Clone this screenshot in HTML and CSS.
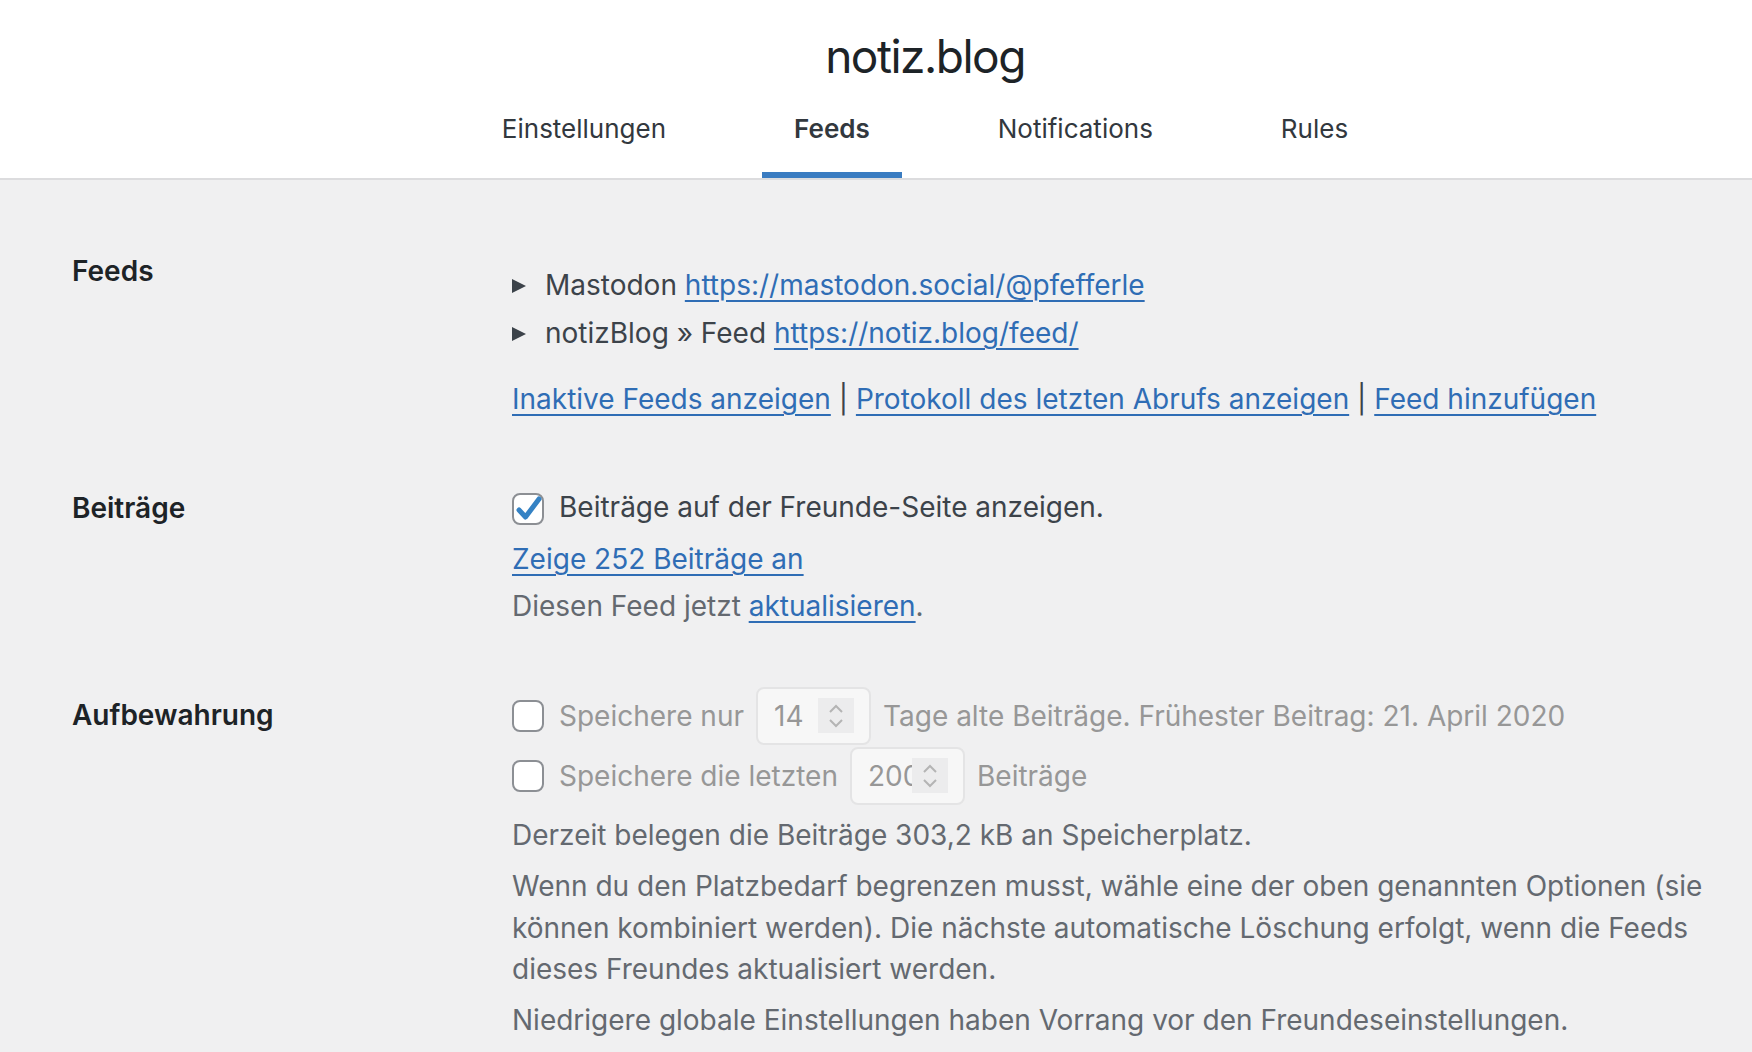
FILE: index.html
```html
<!DOCTYPE html>
<html lang="de">
<head>
<meta charset="utf-8">
<title>notiz.blog – Feeds</title>
<link rel="stylesheet" href="styles.css">
</head>
<body>
<header class="hdr">
  <h1 class="title">notiz.blog</h1>
  <nav class="tabs">
    <a class="tab" href="#">Einstellungen</a>
    <a class="tab active" href="#">Feeds</a>
    <a class="tab" href="#">Notifications</a>
    <a class="tab" href="#">Rules</a>
  </nav>
</header>
<main class="form">
  <section class="section s1">
    <div class="label">Feeds</div>
    <div class="td">
      <ul class="feeds">
        <li><span class="tri"></span><span>Mastodon <a href="#">https://mastodon.social/@pfefferle</a></span></li>
        <li><span class="tri"></span><span>notizBlog » Feed <a href="#">https://notiz.blog/feed/</a></span></li>
      </ul>
      <div class="links"><a href="#">Inaktive Feeds anzeigen</a> | <a href="#">Protokoll des letzten Abrufs anzeigen</a> | <a href="#">Feed hinzufügen</a></div>
    </div>
  </section>
  <section class="section s2">
    <div class="label l2">Beiträge</div>
    <div class="td">
      <label class="check-line">
        <span class="cb checked"><svg viewBox="0 0 32 32" width="32" height="32"><polyline points="7,17 13.5,24 27,6" fill="none" stroke="#3582c4" stroke-width="5" stroke-linecap="round" stroke-linejoin="round"/></svg></span>
        <span>Beiträge auf der Freunde-Seite anzeigen.</span>
      </label>
      <div class="line zeige"><a href="#">Zeige 252 Beiträge an</a></div>
      <div class="line desc diesen">Diesen Feed jetzt <a href="#">aktualisieren</a>.</div>
    </div>
  </section>
  <section class="section s3">
    <div class="label l3">Aufbewahrung</div>
    <div class="td">
      <div class="opt">
        <span class="cb"></span>
        <span class="dis">Speichere nur</span>
        <span class="num"><span class="val">14</span><span class="spin"><svg viewBox="0 0 36 35" width="36" height="35"><polyline points="12,14 18,8 24,14" fill="none" stroke="#b4b4b4" stroke-width="2"/><polyline points="12,22 18,28 24,22" fill="none" stroke="#b4b4b4" stroke-width="2"/></svg></span></span>
        <span class="dis">Tage alte Beiträge. Frühester Beitrag: 21. April 2020</span>
      </div>
      <div class="opt">
        <span class="cb"></span>
        <span class="dis">Speichere die letzten</span>
        <span class="num"><span class="val">200</span><span class="spin"><svg viewBox="0 0 36 35" width="36" height="35"><polyline points="12,14 18,8 24,14" fill="none" stroke="#b4b4b4" stroke-width="2"/><polyline points="12,22 18,28 24,22" fill="none" stroke="#b4b4b4" stroke-width="2"/></svg></span></span>
        <span class="dis">Beiträge</span>
      </div>
      <p class="desc p1">Derzeit belegen die Beiträge 303,2 kB an Speicherplatz.</p>
      <p class="desc p2">Wenn du den Platzbedarf begrenzen musst, wähle eine der oben genannten Optionen (sie können kombiniert werden). Die nächste automatische Löschung erfolgt, wenn die Feeds dieses Freundes aktualisiert werden.</p>
      <p class="desc p3">Niedrigere globale Einstellungen haben Vorrang vor den Freundeseinstellungen.</p>
    </div>
  </section>
</main>
</body>
</html>
```

FILE: styles.css
```css
html, body {
  margin: 0;
  padding: 0;
}
body {
  background: #f0f0f1;
  font-family: Inter, "Noto Sans", sans-serif;
  color: #3c434a;
  overflow: hidden;
  height: 1052px;
}
a {
  color: #2f6db5;
  text-decoration: underline;
  text-decoration-thickness: 2px;
  text-underline-offset: 5px;
}

/* header */
.hdr {
  background: #fff;
  border-bottom: 2px solid #dcdcde;
  padding-left: 98px;
  text-align: center;
}
.title {
  margin: 0;
  padding-top: 26px;
  font-size: 46px;
  font-weight: 400;
  line-height: 60px;
  letter-spacing: -1.5px;
  color: #1d2327;
}
.tabs {
  display: flex;
  justify-content: center;
  margin-top: 10px;
}
.tab {
  display: block;
  padding: 16px 32px 32px;
  margin: 0 32px;
  font-size: 26px;
  line-height: 34px;
  color: #32383e;
  text-decoration: none;
}
.tab.active {
  font-weight: 600;
  box-shadow: inset 0 -6px #3a7cc1;
}

/* form */
.form {
  padding-left: 72px;
  font-size: 28px;
  line-height: 42px;
}
.section {
  display: grid;
  grid-template-columns: 440px 1fr;
}
.label {
  font-weight: 600;
  color: #1d2327;
  line-height: 42px;
}
.s1 { padding-top: 70px; }
.s2 { padding-top: 66px; }
.s3 { padding-top: 60px; }
.l2 { padding-top: 1px; }
.l3 { padding-top: 7px; }

.feeds {
  list-style: none;
  margin: 14px 0 0;
  padding: 0;
}
.feeds li {
  display: flex;
  align-items: center;
  margin-bottom: 6px;
  line-height: 42px;
}
.tri {
  width: 0;
  height: 0;
  border-left: 14px solid #3c434a;
  border-top: 7px solid transparent;
  border-bottom: 7px solid transparent;
  margin-right: 19px;
  margin-top: 2px;
}
.links {
  margin-top: 24px;
}

.check-line {
  display: flex;
  align-items: center;
  height: 42px;
}
.cb {
  box-sizing: border-box;
  width: 32px;
  height: 32px;
  flex: none;
  border: 2px solid #8c8f94;
  border-radius: 8px;
  background: #fff;
  margin-right: 15px;
  display: flex;
  align-items: center;
  justify-content: center;
}
.cb svg {
  flex: none;
}
.check-line .cb {
  margin-top: 3px;
}
.zeige { margin-top: 10px; }
.diesen { margin-top: 5px; }
.desc {
  color: #646970;
}

.opt {
  display: flex;
  align-items: center;
  height: 58px;
  margin-bottom: 2px;
}
.dis {
  color: #979797;
}
.num {
  box-sizing: border-box;
  width: 115px;
  height: 58px;
  margin: 0 12px;
  border: 2px solid #e4e4e5;
  border-radius: 8px;
  background: #f7f7f7;
  display: flex;
  align-items: center;
  padding-left: 16px;
  position: relative;
}
.val {
  color: #979797;
  width: 46px;
  overflow: hidden;
  white-space: nowrap;
}
.spin {
  position: absolute;
  right: 15px;
  top: 9px;
  width: 36px;
  height: 35px;
  background: #ececed;
  display: block;
}
.spin svg {
  display: block;
}

p {
  margin: 0;
}
.p1 { margin-top: 9px; }
.p2 { margin-top: 10px; line-height: 41.5px; }
.p3 { margin-top: 8px; }
```
